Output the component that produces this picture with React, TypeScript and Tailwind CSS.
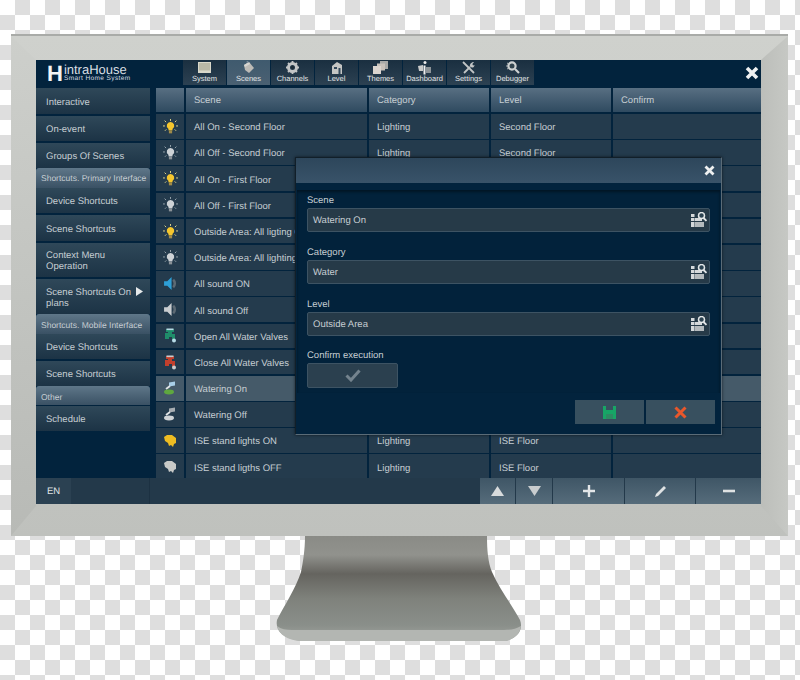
import { ReactNode } from "react";

const FONT = "font-['Liberation_Sans',Arial,sans-serif]";

function Bulb({ on }: { on: boolean }) {
  const c = on ? "#f5c62e" : "#cdd2d6";
  const ray = on ? "#e4d68a" : "#98a4ac";
  return (
    <svg width="15" height="15" viewBox="0 0 14 14">
      <g stroke={ray} strokeWidth="0.9">
        <path d="M7 0v1.800M1.500 1.500l1.400 1.400M12.500 1.500l-1.400 1.400M0 6.500h1.800M12.200 6.500H14M1.800 11l1.300-1.300M12.200 11l-1.300-1.300" />
      </g>
      <path d="M7 2.800a3.400 3.400 0 0 1 2 6.200l-.3 1.800H5.300L5 9A3.400 3.400 0 0 1 7 2.800z" fill={c} />
      <rect x="5.500" y="11" width="3" height="2.400" fill={on ? "#a08a4a" : "#8a9298"} />
    </svg>
  );
}

function Speaker({ color }: { color: string }) {
  return (
    <svg width="15" height="15" viewBox="0 0 14 14">
      <path d="M1 5h3l4-4v12L4 9H1z" fill={color} />
      <path d="M9.500 3.500c2 1.800 2 5.200 0 7" stroke="#5d6a74" strokeWidth="2.400" fill="none" />
    </svg>
  );
}

function Valve({ color, accent }: { color: string; accent: string }) {
  return (
    <svg width="14" height="15" viewBox="0 0 14 15">
      <path d="M3 1h8v3H9v2h3v6H9V9H6v2H2V5h3V4H3z" fill={color} />
      <circle cx="11" cy="12.500" r="2" fill={accent} />
      <rect x="3.500" y="0.500" width="7" height="1.600" fill={accent} />
    </svg>
  );
}

function Watering({ on }: { on: boolean }) {
  return (
    <svg width="14" height="14" viewBox="0 0 14 14">
      <path d="M6 1.500l6-1v4l-6 1z" fill={on ? "#a8cfe8" : "#a7adb2"} />
      <path d="M7 5L3 8" stroke="#e0e4e6" strokeWidth="1.800" />
      <ellipse cx="6" cy="11" rx="5" ry="2.400" fill={on ? "#5fa83f" : "#cfd3d6"} />
    </svg>
  );
}

function Lamp({ color }: { color: string }) {
  return (
    <svg width="14" height="14" viewBox="0 0 14 14">
      <path d="M1 3l3-2h5l4 3v5l-2 1-1 3-2-2-2 1-1-3-3-2z" fill={color} />
    </svg>
  );
}

function Finder() {
  return (
    <svg width="17" height="16" viewBox="0 0 17 16" className="shrink-0">
      <g fill="#d5d9db">
        <rect x="0" y="2" width="3.500" height="3" />
        <rect x="0" y="6" width="3.500" height="3" />
        <rect x="0" y="10" width="3.500" height="5" />
        <rect x="4" y="6" width="7" height="3" />
        <rect x="4" y="10" width="9" height="5" fill="#b4babd" />
      </g>
      <circle cx="10.500" cy="3.600" r="3" fill="#2b4250" stroke="#e4e7e8" strokeWidth="1.500" />
      <path d="M12.500 6l3 2.800" stroke="#e4e7e8" strokeWidth="1.800" />
    </svg>
  );
}

const toolbarIcons: Record<string, ReactNode> = {
  System: (
    <svg width="13" height="11" viewBox="0 0 13 11">
      <rect width="13" height="11" fill="#d9d8ca" />
      <rect x="1" y="1" width="11" height="7.500" fill="#b9b8a6" />
    </svg>
  ),
  Scenes: (
    <svg width="13" height="13" viewBox="0 0 13 13">
      <path d="M2 4l5-3 5 6-5 5-4-3z" fill="#bdbbb6" />
      <path d="M2 4l5-3 1 2-5 3z" fill="#d7d5d0" />
      <path d="M4 1l2-1 1 2z" fill="#8a9aa6" />
    </svg>
  ),
  Channels: (
    <svg width="13" height="13" viewBox="0 0 13 13">
      <circle cx="6.500" cy="6.500" r="4" fill="none" stroke="#c3c5c6" strokeWidth="3" />
      <path d="M6.500 0v2M6.500 11v2M0 6.500h2M11 6.500h2M2 2l1.400 1.400M11 11l-1.400-1.400M11 2L9.600 3.400M2 11l1.400-1.400" stroke="#c3c5c6" strokeWidth="1.800" />
      <circle cx="6.500" cy="6.500" r="1.400" fill="#1d2c36" />
    </svg>
  ),
  Level: (
    <svg width="12" height="13" viewBox="0 0 12 13">
      <path d="M1 5l5-4 5 3v9H1z" fill="#c5c6c4" />
      <rect x="3" y="6" width="3" height="2" fill="#33485a" />
      <rect x="7.500" y="7" width="2" height="6" fill="#33485a" />
    </svg>
  ),
  Themes: (
    <svg width="15" height="13" viewBox="0 0 15 13">
      <rect x="7" y="0" width="8" height="8" fill="#a9aaa8" />
      <rect x="4" y="2.500" width="8" height="7" fill="#c8c2bb" />
      <rect x="0" y="5" width="8" height="8" fill="#dcd5cf" />
    </svg>
  ),
  Dashboard: (
    <svg width="13" height="14" viewBox="0 0 13 14">
      <circle cx="7" cy="1.600" r="1.500" fill="#e8e8e8" />
      <path d="M0 5l5-1v6H1z" fill="#c9cac9" />
      <rect x="5.500" y="4.500" width="2" height="9" fill="#eeeeee" />
      <path d="M8 6h5v6H8z" fill="#8d9498" />
    </svg>
  ),
  Settings: (
    <svg width="13" height="13" viewBox="0 0 13 13">
      <path d="M1 1l11 11" stroke="#c2c5c6" strokeWidth="1.800" />
      <path d="M2 12l6-6" stroke="#c2c5c6" strokeWidth="1.800" />
      <path d="M8 5.500c-.5-2 1-4.500 4-4.500l-1.600 2 .6 1.400L12.500 4c0 2.500-2.500 3.500-4.500 1.500z" fill="#c2c5c6" />
    </svg>
  ),
  Debugger: (
    <svg width="14" height="13" viewBox="0 0 14 13">
      <circle cx="6" cy="5" r="3.600" fill="#33454f" stroke="#cfd2d2" strokeWidth="2.200" />
      <path d="M9 8l4 4" stroke="#cfd2d2" strokeWidth="2.200" />
      <path d="M0 5h2M1 2l2 1M1 8l2-1" stroke="#b9bdbe" strokeWidth="0.900" />
    </svg>
  ),
};

const tabs = ["System", "Scenes", "Channels", "Level", "Themes", "Dashboard", "Settings", "Debugger"];

type SideItem = { label: ReactNode; group?: boolean; h: string };

const side: SideItem[] = [
  { label: "Interactive", h: "h-[26px] mb-[2px]" },
  { label: "On-event", h: "h-[25px] mb-[2px]" },
  { label: "Groups Of Scenes", h: "h-[25px]" },
  { label: "Shortcuts. Primary Interface", group: true, h: "h-[20px] pt-px" },
  { label: "Device Shortcuts", h: "h-[25px] mb-[2px]" },
  { label: "Scene Shortcuts", h: "h-[26px] mb-[2px]" },
  { label: "Context Menu Operation", h: "h-[34px] mb-[2px]" },
  { label: "Scene Shortcuts On plans", h: "h-[35px]" },
  { label: "Shortcuts. Mobile Interface", group: true, h: "h-[20px] pt-[2px]" },
  { label: "Device Shortcuts", h: "h-[25px] mb-[2px]" },
  { label: "Scene Shortcuts", h: "h-[25px]" },
  { label: "Other", group: true, h: "h-[19px] mb-px pt-[3px]" },
  { label: "Schedule", h: "h-[25px]" },
];

const rows: { icon: ReactNode; scene: string; cat?: string; level?: string; active?: boolean }[] = [
  { icon: <Bulb on />, scene: "All On - Second Floor", cat: "Lighting", level: "Second Floor" },
  { icon: <Bulb on={false} />, scene: "All Off - Second Floor", cat: "Lighting", level: "Second Floor" },
  { icon: <Bulb on />, scene: "All On - First Floor" },
  { icon: <Bulb on={false} />, scene: "All Off - First Floor" },
  { icon: <Bulb on />, scene: "Outside Area: All ligting ON" },
  { icon: <Bulb on={false} />, scene: "Outside Area: All lighting OFF" },
  { icon: <Speaker color="#2e9fd6" />, scene: "All sound ON" },
  { icon: <Speaker color="#c9cdd0" />, scene: "All sound Off" },
  { icon: <Valve color="#1f8d6a" accent="#b7dbe6" />, scene: "Open All Water Valves" },
  { icon: <Valve color="#c23f2c" accent="#c9ccce" />, scene: "Close All Water Valves" },
  { icon: <Watering on />, scene: "Watering On", active: true },
  { icon: <Watering on={false} />, scene: "Watering Off" },
  { icon: <Lamp color="#eebc22" />, scene: "ISE stand lights ON", cat: "Lighting", level: "ISE Floor" },
  { icon: <Lamp color="#c8cac8" />, scene: "ISE stand ligths OFF", cat: "Lighting", level: "ISE Floor" },
];

function Cell({ w, children, active }: { w: string; children?: ReactNode; active?: boolean }) {
  return (
    <div
      className={`${w} h-full flex items-center pl-2 pt-[4px] whitespace-nowrap ${
        active ? "bg-[#455a69]" : "bg-[#243b4d]"
      }`}
    >
      {children}
    </div>
  );
}

function HeadCell({ w, children }: { w: string; children?: ReactNode }) {
  return (
    <div className={`${w} h-full flex items-center pl-2 pt-[3px] bg-gradient-to-b from-[#586f82] to-[#2f4a60]`}>
      {children}
    </div>
  );
}

function Field({ label, value, className }: { label: string; value: string; className: string }) {
  return (
    <div className={className}>
      <div className="h-[16px] leading-[18px] text-[#c6ced3]">{label}</div>
      <div className="h-[24px] flex items-center justify-between pl-[5px] pr-[1px] rounded-[2px] border border-[#3d5363] bg-[#263a48] text-[#c6ced3]">
        <span className="pt-[3px]">{value}</span>
        <Finder />
      </div>
    </div>
  );
}

export default function App() {
  return (
    <div
      className={`${FONT} w-[800px] h-[680px] overflow-hidden pt-[34px] pl-[11px] text-[9.5px] [text-rendering:geometricPrecision] bg-[repeating-conic-gradient(#dedede_0_25%,#ffffff_0_50%)] bg-[length:30px_30px]`}
    >
      {/* monitor frame */}
      <div className="relative w-[777px] h-[502px] pt-[24px] pl-[25px] border-t-2 border-[#a9aba8] bg-gradient-to-b from-[#cfd1cd] to-[#bfc1bd]">
        <div className="absolute left-0 top-0 w-[25px] h-full bg-gradient-to-b from-[#cdcfcb] to-[#b8bab6] [clip-path:polygon(0_0,100%_24px,100%_470px,0_100%)]" />
        <div className="absolute right-0 top-0 w-[27px] h-full bg-gradient-to-r from-[#bcbeba] to-[#c6c8c4] [clip-path:polygon(0_24px,100%_0,100%_100%,0_470px)]" />

        {/* screen */}
        <div className="relative w-[725px] h-[444px] flex flex-col bg-[#02233d] text-[#c6ced3] [&_svg]:blur-[0.4px]">
          {/* top bar */}
          <div className="h-[28px] flex shrink-0">
            <div className="w-[147px] pl-[11px] pt-[4px] flex items-start gap-[1px] shrink-0">
              <div className="text-[#f2f4f5] text-[22px] leading-[20px] font-bold">H</div>
              <div className="flex flex-col text-[#d9dfe3]">
                <span className="text-[13px] leading-[11px]">intraHouse</span>
                <span className="text-[6.500px] leading-[7px] tracking-[0.4px] whitespace-nowrap">Smart Home System</span>
              </div>
            </div>
            <div className="flex gap-px h-[25px]">
              {tabs.map((t) => (
                <div
                  key={t}
                  className={`w-[43px] flex flex-col items-center justify-end pb-[2px] text-[#e1e5e7] text-[7.500px] leading-[9px] ${
                    t === "Scenes" ? "bg-gradient-to-b from-[#3f5a6e] to-[#4a6072]" : "bg-gradient-to-b from-[#1a2f40] to-[#2c4152]"
                  }`}
                >
                  <div className="h-[13px] flex items-center">{toolbarIcons[t]}</div>
                  {t}
                </div>
              ))}
            </div>
            <div className="flex-1 flex justify-end items-start pt-[6px] pr-[2px]">
              <svg width="14" height="14" viewBox="0 0 14 14">
                <path d="M2 2l10 10M12 2L2 12" stroke="#eef0f1" strokeWidth="3.600" />
              </svg>
            </div>
          </div>

          {/* main */}
          <div className="flex flex-1 min-h-0">
            <div className="w-[114px] shrink-0 flex flex-col">
              {side.map((s, i) =>
                s.group ? (
                  <div
                    key={i}
                    className={`${s.h} flex items-center pl-[5px] rounded-t-[3px] text-[8.500px] text-[#c6ced3] whitespace-nowrap bg-gradient-to-b from-[#5f7789] to-[#3a5164]`}
                  >
                    {s.label}
                  </div>
                ) : (
                  <div
                    key={i}
                    className={`${s.h} flex items-center pl-[10px] pr-[6px] pt-[2px] leading-[11px] bg-gradient-to-b from-[#2f4859] to-[#1c3345]`}
                  >
                    {s.label === "Scene Shortcuts On plans" ? (
                      <div className="relative w-full">
                        Scene Shortcuts On
                        <br />
                        plans
                        <svg className="absolute right-0 top-[-1px]" width="9" height="11" viewBox="0 0 9 11">
                          <path d="M1 1l7 4.500-7 4.500z" fill="#e6e9ea" />
                        </svg>
                      </div>
                    ) : (
                      s.label
                    )}
                  </div>
                ),
              )}
            </div>

            <div className="flex-1 ml-[6px] flex flex-col overflow-hidden">
              <div className="h-[24px] flex gap-[2px] shrink-0 mb-[2px]">
                <HeadCell w="w-[28px]" />
                <HeadCell w="w-[181px]">Scene</HeadCell>
                <HeadCell w="w-[120px]">Category</HeadCell>
                <HeadCell w="w-[120px]">Level</HeadCell>
                <HeadCell w="w-[148px]">Confirm</HeadCell>
              </div>
              <div className="flex flex-col gap-[1.500px]">
                {rows.map((r) => (
                  <div key={r.scene} className="h-[24.700px] flex gap-[2px] shrink-0">
                    <div
                      className={`w-[28px] h-full flex items-center justify-center ${
                        r.active ? "bg-[#455a69]" : "bg-[#243b4d]"
                      }`}
                    >
                      {r.icon}
                    </div>
                    <Cell w="w-[181px]" active={r.active}>
                      {r.scene}
                    </Cell>
                    <Cell w="w-[120px]" active={r.active}>
                      {r.cat}
                    </Cell>
                    <Cell w="w-[120px]" active={r.active}>
                      {r.level}
                    </Cell>
                    <Cell w="w-[148px]" active={r.active} />
                  </div>
                ))}
              </div>
            </div>
          </div>

          {/* bottom bar */}
          <div className="h-[26px] flex shrink-0 bg-[#23394a]">
            <div className="w-[35px] flex items-center pl-[11px] pt-[2px] bg-[#2b4152] text-[#e0e4e6]">EN</div>
            <div className="w-[79px] border-r border-[#1c3142]" />
            <div className="flex-1" />
            <div className="flex gap-px text-[#e3e6e8]">
              <div className="w-[35px] flex items-center justify-center bg-gradient-to-b from-[#3f5666] to-[#566c7b]">
                <svg width="13" height="10" viewBox="0 0 13 10"><path d="M6.500 0L13 10H0z" fill="#d8dbdc" /></svg>
              </div>
              <div className="w-[36px] flex items-center justify-center bg-gradient-to-b from-[#3f5666] to-[#566c7b]">
                <svg width="13" height="10" viewBox="0 0 13 10"><path d="M6.500 10L13 0H0z" fill="#c9cdcf" /></svg>
              </div>
              <div className="w-[71px] flex items-center justify-center bg-gradient-to-b from-[#3f5666] to-[#566c7b]">
                <svg width="12" height="12" viewBox="0 0 12 12"><path d="M6 0v12M0 6h12" stroke="#e3e6e8" strokeWidth="2.400" /></svg>
              </div>
              <div className="w-[70px] flex items-center justify-center bg-gradient-to-b from-[#3f5666] to-[#566c7b]">
                <svg width="13" height="13" viewBox="0 0 13 13"><path d="M10 1l2 2-8 8-3 1 1-3z" fill="#dfe2e3" /></svg>
              </div>
              <div className="w-[65px] flex items-center justify-center bg-gradient-to-b from-[#3f5666] to-[#566c7b]">
                <svg width="12" height="4" viewBox="0 0 12 4"><rect width="12" height="2.600" y="0.700" fill="#dfe2e3" /></svg>
              </div>
            </div>
          </div>

          {/* dialog */}
          <div className="absolute left-[259px] top-[97px] w-[427px] h-[278px] flex flex-col border border-[#5a6b77] border-t-[#111f29] border-l-[#111f29] bg-[#02233d] shadow-[0_0_3px_rgba(0,0,0,0.6)]">
            <div className="h-[25px] shrink-0 flex items-center justify-end pr-[6px] bg-gradient-to-b from-[#2d465b] to-[#395369]">
              <svg width="11" height="11" viewBox="0 0 11 11">
                <path d="M1.500 1.500l8 8M9.500 1.500l-8 8" stroke="#eef0f1" strokeWidth="2.800" />
              </svg>
            </div>
            <div className="h-[203px] mt-[7px] mx-[1px] shrink-0 px-[10px] pt-[2px] bg-[#02223b] shadow-[inset_0_2px_3px_rgba(0,0,0,0.4)]">
              <Field label="Scene" value="Watering On" className="" />
              <Field label="Category" value="Water" className="mt-[12px]" />
              <Field label="Level" value="Outside Area" className="mt-[12px]" />
              <div className="mt-[11px] h-[16px] leading-[18px]">Confirm execution</div>
              <div className="w-[91px] h-[25px] flex items-center justify-center rounded-[2px] border border-[#3d5363] bg-[#2b404f]">
                <svg width="16" height="13" viewBox="0 0 16 13">
                  <path d="M1.500 6.500l4.500 4.500 8.500-9.500" fill="none" stroke="#74838e" strokeWidth="3" />
                </svg>
              </div>
            </div>
            <div className="flex justify-end gap-[2px] pr-[6px] pt-[7px]">
              <div className="w-[69px] h-[24px] flex items-center justify-center bg-[#38505f]">
                <svg width="13" height="13" viewBox="0 0 13 13">
                  <path d="M0 0h3v4h7V0h3v13H0z" fill="#17a566" />
                  <rect x="3" y="8" width="7" height="5" fill="#2d8a63" />
                </svg>
              </div>
              <div className="w-[69px] h-[24px] flex items-center justify-center bg-[#38505f]">
                <svg width="13" height="13" viewBox="0 0 13 13">
                  <path d="M1.500 1.500l10 10M11.500 1.500l-10 10" stroke="#e9572b" strokeWidth="3" />
                </svg>
              </div>
            </div>
          </div>
        </div>
      </div>

      {/* stand */}
      <svg className="ml-[265px]" width="246" height="106" viewBox="0 0 246 106">
        <defs>
          <linearGradient id="stand" x1="0" y1="0" x2="0" y2="1">
            <stop offset="0" stopColor="#8a8b86" />
            <stop offset="0.18" stopColor="#91928d" />
            <stop offset="0.36" stopColor="#65645f" />
            <stop offset="0.6" stopColor="#7f827c" />
            <stop offset="0.85" stopColor="#8a8f8a" />
            <stop offset="1" stopColor="#a2a5a1" />
          </linearGradient>
        </defs>
        <path
          d="M29 0H211C211 14 212 26 216 36C224 54 238 72 244 84C247 92 244 101 230 105H24C6 102 -1 94 1 84C8 70 20 52 25 36C27 26 29 14 29 0z"
          fill="url(#stand)"
        />
        <path d="M1 90C3 99 12 104 24 105H230C238 103 244 98 245 90C240 93 234 94 228 94H16C10 94 5 93 1 90z" fill="#b3b6b2" />
      </svg>
    </div>
  );
}
